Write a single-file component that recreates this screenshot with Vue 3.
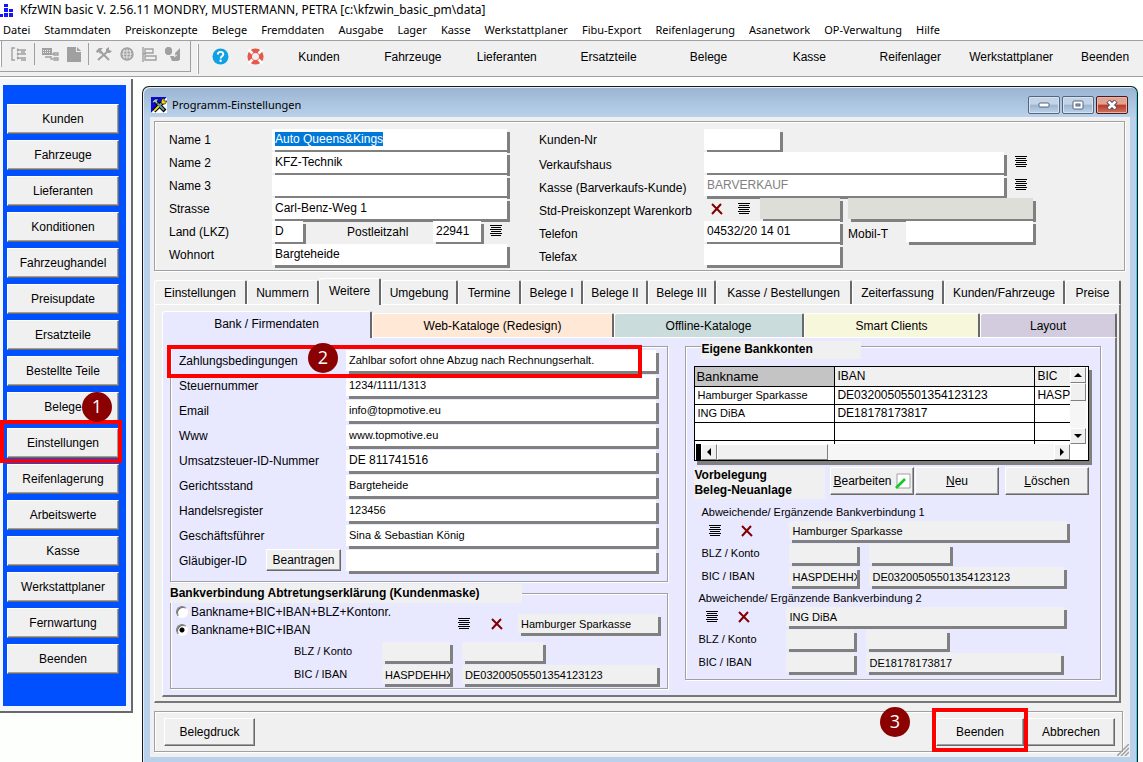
<script setup>
import { onMounted, ref } from 'vue'

const menus = ['Datei', 'Stammdaten', 'Preiskonzepte', 'Belege', 'Fremddaten', 'Ausgabe', 'Lager', 'Kasse', 'Werkstattplaner', 'Fibu-Export', 'Reifenlagerung', 'Asanetwork', 'OP-Verwaltung', 'Hilfe']
const quick = ['Kunden', 'Fahrzeuge', 'Lieferanten', 'Ersatzteile', 'Belege', 'Kasse', 'Reifenlager', 'Werkstattplaner', 'Beenden']
const side = ['Kunden', 'Fahrzeuge', 'Lieferanten', 'Konditionen', 'Fahrzeughandel', 'Preisupdate', 'Ersatzteile', 'Bestellte Teile', 'Belege', 'Einstellungen', 'Reifenlagerung', 'Arbeitswerte', 'Kasse', 'Werkstattplaner', 'Fernwartung', 'Beenden']
const tabs = ['Einstellungen', 'Nummern', 'Weitere', 'Umgebung', 'Termine', 'Belege I', 'Belege II', 'Belege III', 'Kasse / Bestellungen', 'Zeiterfassung', 'Kunden/Fahrzeuge', 'Preise']
const subTabs = [
  { text: 'Bank / Firmendaten', tone: 'lavender' },
  { text: 'Web-Kataloge (Redesign)', tone: 'peach' },
  { text: 'Offline-Kataloge', tone: 'teal' },
  { text: 'Smart Clients', tone: 'cream' },
  { text: 'Layout', tone: 'mauve' }
]
const company = ref([
  { id: 'zahlung', label: 'Zahlungsbedingungen', value: 'Zahlbar sofort ohne Abzug nach Rechnungserhalt.' },
  { id: 'steuer', label: 'Steuernummer', value: '1234/1111/1313' },
  { id: 'email', label: 'Email', value: 'info@topmotive.eu' },
  { id: 'www', label: 'Www', value: 'www.topmotive.eu' },
  { id: 'ust', label: 'Umsatzsteuer-ID-Nummer', value: 'DE 811741516' },
  { id: 'gericht', label: 'Gerichtsstand', value: 'Bargteheide' },
  { id: 'handel', label: 'Handelsregister', value: '123456' },
  { id: 'gf', label: 'Geschäftsführer', value: 'Sina & Sebastian König' },
  { id: 'glaeubiger', label: 'Gläubiger-ID', value: '' }
])
const accounts = [
  ['Hamburger Sparkasse', 'DE03200505501354123123', 'HASPDEHHXXX'],
  ['ING DiBA', 'DE18178173817', ''],
  ['', '', ''],
  ['', '', '']
]
const extra = [
  { no: 1, bank: 'Hamburger Sparkasse', bic: 'HASPDEHHXXX', iban: 'DE03200505501354123123' },
  { no: 2, bank: 'ING DiBA', bic: '', iban: 'DE18178173817' }
]
const mode = ref('kurz')
const name1 = ref(null)

onMounted(() => {
  name1.value.focus()
  name1.value.select()
})
</script>

<template>
  <div class="app">
    <header class="titlebar">
      <svg class="logo" width="14" height="15" viewBox="0 0 14 15" aria-hidden="true">
        <path fill="#1414ff" d="M4 1h4v3H4zM4 5h4v4H4zM9 6h4v3H9zM0 11h3v3H0zM4 10h4v4H4zM9 10h4v4H9z" />
      </svg>
      <h1>KfzWIN basic V. 2.56.11 MONDRY, MUSTERMANN, PETRA [c:\kfzwin_basic_pm\data]</h1>
    </header>

    <nav class="menubar">
      <button v-for="m in menus" :key="m" type="button">{{ m }}</button>
    </nav>

    <div class="toolbar">
      <div class="tools">
        <i class="grip"></i>
        <button type="button" class="tool" aria-label="Struktur" disabled>
          <svg width="16" height="14" viewBox="0 0 16 14"><path fill="none" stroke="#a0a0a0" stroke-width="1.4" d="M4 1H1v12h3M6 2l2 1-2 1M6 6l2 1-2 1M6 10l2 1-2 1M9 3h6M9 7h6M9 11h6M10 5h4M10 13h5" /></svg>
        </button>
        <i class="sep"></i>
        <button type="button" class="tool" aria-label="Netz" disabled>
          <svg width="17" height="14" viewBox="0 0 17 14"><path fill="#a0a0a0" d="M0 1h10v7H0z" /><path stroke="#f0f0f0" stroke-dasharray="1 1" d="M1 3.500h8M1 5.500h8" /><path fill="none" stroke="#a0a0a0" stroke-width="1.3" d="M3 10h6M9 9v3h2M12 6h4v2h-4zM12 11h4v2h-4zM10 7h2" /></svg>
        </button>
        <button type="button" class="tool" aria-label="Seite" disabled>
          <svg width="14" height="15" viewBox="0 0 14 15"><path fill="#a0a0a0" d="M0 0h9v5h5v10H0zM10 0l4 4h-4z" /></svg>
        </button>
        <i class="sep"></i>
        <button type="button" class="tool" aria-label="Werkzeug" disabled>
          <svg width="16" height="14" viewBox="0 0 16 14"><path fill="none" stroke="#a0a0a0" stroke-width="2" d="M2 13L12 4M4 4l9 9" /><path fill="#a0a0a0" d="M0 4l3-3h4L5 3l1 2-2 2-1-2-2 1zM10 2l3-2v3l3 1-2 2-4 0z" /></svg>
        </button>
        <button type="button" class="tool" aria-label="Internet" disabled>
          <svg width="14" height="14" viewBox="0 0 14 14"><circle cx="7" cy="7" r="6" fill="#a0a0a0" /><path fill="none" stroke="#f0f0f0" stroke-width=".8" d="M2 4h10M1 7h12M2 10h10M7 1v12M4.500 2Q2 7 4.500 12M9.500 2q2.500 5 0 10" /><circle cx="7" cy="7" r="6" fill="none" stroke="#a0a0a0" stroke-width="1.4" /></svg>
        </button>
        <button type="button" class="tool" aria-label="Ausrichten" disabled>
          <svg width="15" height="15" viewBox="0 0 15 15"><path fill="none" stroke="#a0a0a0" stroke-width="1.4" d="M1 0v15M1 7h3M3 2h8v4H3zM3 9h11v4H3z" /></svg>
        </button>
        <button type="button" class="tool" aria-label="Formen" disabled>
          <svg width="16" height="15" viewBox="0 0 16 15"><path fill="#a0a0a0" d="M0 2l2-2h3l2 2v4L5 8H2L0 6zM10 6l5-5v12h-4zM5 9h6l3 5H7z" /><path stroke="#f0f0f0" stroke-width="1" d="M9 10l3-2" /></svg>
        </button>
      </div>
      <i class="grip second"></i>
      <button type="button" class="round" aria-label="Hilfe">
        <svg width="17" height="17" viewBox="0 0 17 17"><circle cx="8.500" cy="8.500" r="8" fill="#0ea2e4" /><path fill="none" stroke="#fff" stroke-width="1.900" d="M5.800 6.500c0-3.600 5.500-3.400 5.500-.3 0 2-2.700 2-2.700 4.300" /><circle cx="8.600" cy="12.700" r="1.200" fill="#fff" /></svg>
      </button>
      <button type="button" class="round last" aria-label="Support">
        <svg width="17" height="17" viewBox="0 0 17 17"><circle cx="8.500" cy="8.500" r="5.800" fill="none" stroke="#e8574c" stroke-width="4.600" /><path stroke="#fff" stroke-width="2.600" d="M1.500 1.500l4 4M11.500 11.500l4 4M15.500 1.500l-4 4M5.500 11.500l-4 4" /></svg>
      </button>
      <nav class="quick">
        <button v-for="q in quick" :key="q" type="button">{{ q }}</button>
      </nav>
    </div>

    <div class="workspace">
      <aside class="sidebar">
        <nav>
          <div v-for="(s, i) in side" :key="s" class="anchor">
            <button type="button" class="btn">{{ s }}</button>
            <span v-if="i === 9" class="frame-mark side-mark"></span>
            <span v-if="i === 9" class="badge badge-one">1</span>
          </div>
        </nav>
      </aside>

      <main class="window">
        <div class="caption">
          <svg width="16" height="16" viewBox="0 0 16 16" aria-hidden="true"><path fill="#0a0ae6" d="M0 0h16L0 16z" /><path fill="#fff" d="M16 0v16H0z" /><path stroke="#000" stroke-width="4" d="M3 14L12 5M5 5l9 9" /><path stroke="#f2d21a" stroke-width="2" d="M3 14l5-5" /><path stroke="#6c9a9c" stroke-width="2" d="M5 5l8 8M9 8l3-3" /><path fill="#a8c8c8" stroke="#000" stroke-width=".6" d="M1 5l3-3h4L6 4l1 2-2 1-1-2-2 1z" /><path fill="#f2d21a" stroke="#000" stroke-width=".6" d="M10 5l1-3 2-1v3h3l-2 3h-3z" /></svg>
          <h2>Programm-Einstellungen</h2>
          <button type="button" class="win" aria-label="Minimieren"><svg width="12" height="6" viewBox="0 0 12 6"><rect x="1" y="1" width="10" height="4" rx="1" fill="#fff" stroke="#56657c" /></svg></button>
          <button type="button" class="win" aria-label="Maximieren"><svg width="12" height="10" viewBox="0 0 12 10"><rect x="1" y="1" width="10" height="8" rx="1" fill="#fff" stroke="#56657c" /><rect x="4" y="4" width="4" height="2" fill="#9cb4cf" stroke="#56657c" /></svg></button>
          <button type="button" class="win close" aria-label="Schließen"><svg width="12" height="10" viewBox="0 0 12 10"><path stroke="#5b4c60" stroke-width="4.600" d="M2 1l8 8M10 1L2 9" /><path stroke="#fff" stroke-width="2.600" d="M2.500 1.500l7 7M9.500 1.500l-7 7" /></svg></button>
        </div>

        <div class="client">
          <section class="groove address">
            <div>
              <div class="row"><label for="name1">Name 1</label><input id="name1" ref="name1" class="field grow" value="Auto Queens&amp;Kings"></div>
              <div class="row"><label for="name2">Name 2</label><input id="name2" class="field grow" value="KFZ-Technik"></div>
              <div class="row"><label for="name3">Name 3</label><input id="name3" class="field grow"></div>
              <div class="row"><label for="str">Strasse</label><input id="str" class="field grow" value="Carl-Benz-Weg 1"></div>
              <div class="row">
                <label for="lkz">Land (LKZ)</label><input id="lkz" class="field w-lkz" value="D">
                <label for="plz" class="plz-label">Postleitzahl</label><input id="plz" class="field w-plz" value="22941">
                <button type="button" class="ico" aria-label="Auswahl"><i class="lines"></i></button>
              </div>
              <div class="row"><label for="ort">Wohnort</label><input id="ort" class="field grow" value="Bargteheide"></div>
            </div>
            <div class="contact">
              <div class="row"><label for="kdnr">Kunden-Nr</label><input id="kdnr" class="field w-nr"></div>
              <div class="row"><label for="vk">Verkaufshaus</label><input id="vk" class="field w-wide"><button type="button" class="ico" aria-label="Auswahl"><i class="lines"></i></button></div>
              <div class="row"><label for="bar">Kasse (Barverkaufs-Kunde)</label><input id="bar" class="field w-wide muted" value="BARVERKAUF" readonly><button type="button" class="ico" aria-label="Auswahl"><i class="lines"></i></button></div>
              <div class="row">
                <label for="std">Std-Preiskonzept Warenkorb</label>
                <span class="pair">
                  <button type="button" class="ico" aria-label="Entfernen"><svg width="12" height="12" viewBox="0 0 12 12"><path stroke="#800000" stroke-width="2" d="M1 1l10 10M10 1L1 11" /></svg></button>
                  <button type="button" class="ico" aria-label="Auswahl"><i class="lines"></i></button>
                </span>
                <input id="std" class="field off w-std" readonly><input class="field off w-std2" aria-label="Preiskonzept" readonly>
              </div>
              <div class="row"><label for="tel">Telefon</label><input id="tel" class="field w-tel" value="04532/20 14 01"><label for="mob" class="mob">Mobil-T</label><input id="mob" class="field w-mob"></div>
              <div class="row"><label for="fax">Telefax</label><input id="fax" class="field w-tel"></div>
            </div>
          </section>

          <div class="tabs main-tabs">
            <button v-for="(t, i) in tabs" :key="t" type="button" :class="['tab', { active: i === 2 }]">{{ t }}</button>
          </div>
          <div class="page outer">
            <div class="tabs sub-tabs">
              <button v-for="(t, i) in subTabs" :key="t.text" type="button" :class="['tab', t.tone, { active: i === 0 }]">{{ t.text }}</button>
            </div>
            <div class="page inner">
              <div class="col">
                <section class="groove company">
                  <div v-for="(c, i) in company" :key="c.id" class="row anchor">
                    <label :for="c.id">{{ c.label }}</label>
                    <button v-if="c.id === 'glaeubiger'" type="button" class="btn request">Beantragen</button>
                    <input :id="c.id" v-model="c.value" :class="['field', 'grow', { big: c.id === 'ust' }]">
                    <span v-if="i === 0" class="frame-mark row-mark"></span>
                    <span v-if="i === 0" class="badge badge-two">2</span>
                  </div>
                </section>

                <section class="groove cession">
                  <h3>Bankverbindung Abtretungserklärung (Kundenmaske)</h3>
                  <div class="choice">
                    <div class="radios">
                      <label><input v-model="mode" type="radio" name="mode" value="lang">Bankname+BIC+IBAN+BLZ+Kontonr.</label>
                      <label><input v-model="mode" type="radio" name="mode" value="kurz">Bankname+BIC+IBAN</label>
                    </div>
                    <span class="pair">
                      <button type="button" class="ico" aria-label="Auswahl"><i class="lines"></i></button>
                      <button type="button" class="ico" aria-label="Entfernen"><svg width="12" height="12" viewBox="0 0 12 12"><path stroke="#800000" stroke-width="2" d="M1 1l10 10M10 1L1 11" /></svg></button>
                    </span>
                    <input class="slim w-bank" aria-label="Bank" value="Hamburger Sparkasse" readonly>
                  </div>
                  <div class="srow"><label for="z-blz">BLZ / Konto</label><input id="z-blz" class="slim w-s" readonly><input class="slim w-m" aria-label="Konto" readonly></div>
                  <div class="srow"><label for="z-bic">BIC / IBAN</label><input id="z-bic" class="slim w-s" value="HASPDEHHXXX" readonly><input class="slim w-l" aria-label="IBAN" value="DE03200505501354123123" readonly></div>
                </section>
              </div>

              <section class="groove banks">
                <h3>Eigene Bankkonten</h3>
                <div class="list">
                  <div class="cells">
                    <table>
                      <thead><tr><th>Bankname</th><th>IBAN</th><th>BIC</th></tr></thead>
                      <tbody>
                        <tr v-for="(a, i) in accounts" :key="i"><td v-for="(v, k) in a" :key="k">{{ v }}</td></tr>
                      </tbody>
                    </table>
                  </div>
                  <div class="vbar">
                    <button type="button" aria-label="Nach oben"><svg width="8" height="4" viewBox="0 0 8 4"><path d="M4 0l4 4H0z" /></svg></button>
                    <i class="vthumb"></i>
                    <i class="track"></i>
                    <button type="button" aria-label="Nach unten"><svg width="8" height="4" viewBox="0 0 8 4"><path d="M0 0h8L4 4z" /></svg></button>
                  </div>
                  <div class="hbar">
                    <button type="button" aria-label="Nach links"><svg width="4" height="8" viewBox="0 0 4 8"><path d="M4 0v8L0 4z" /></svg></button>
                    <i class="hthumb"></i>
                    <i class="track"></i>
                    <button type="button" aria-label="Nach rechts"><svg width="4" height="8" viewBox="0 0 4 8"><path d="M0 0l4 4-4 4z" /></svg></button>
                  </div>
                </div>
                <div class="actions">
                  <h3>Vorbelegung<br>Beleg-Neuanlage</h3>
                  <button type="button" class="btn edit"><span><u>B</u>earbeiten</span>
                    <svg width="16" height="16" viewBox="0 0 16 16" aria-hidden="true"><path fill="#fff" stroke="#a0a0a0" d="M2 1h13v14H2z" /><path stroke="#14c828" stroke-width="2.600" d="M1 15l9-9" /></svg>
                  </button>
                  <button type="button" class="btn"><span><u>N</u>eu</span></button>
                  <button type="button" class="btn apart"><span><u>L</u>öschen</span></button>
                </div>
                <div v-for="e in extra" :key="e.no" :class="['extra', 'extra-' + e.no]">
                  <p>Abweichende/ Ergänzende Bankverbindung {{ e.no }}</p>
                  <div class="srow">
                    <span class="pair">
                      <button type="button" class="ico" aria-label="Auswahl"><i class="lines"></i></button>
                      <button type="button" class="ico" aria-label="Entfernen"><svg width="12" height="12" viewBox="0 0 12 12"><path stroke="#800000" stroke-width="2" d="M1 1l10 10M10 1L1 11" /></svg></button>
                    </span>
                    <input class="slim w-xl" aria-label="Bank" :value="e.bank" readonly>
                  </div>
                  <div class="srow"><label :for="'blz' + e.no">BLZ / Konto</label><input :id="'blz' + e.no" class="slim w-s" readonly><input class="slim w-m" aria-label="Konto" readonly></div>
                  <div class="srow"><label :for="'bic' + e.no">BIC / IBAN</label><input :id="'bic' + e.no" class="slim w-s" :value="e.bic" readonly><input class="slim w-l" aria-label="IBAN" :value="e.iban" readonly></div>
                </div>
              </section>
            </div>
          </div>

          <footer class="groove bottom">
            <button type="button" class="btn print">Belegdruck</button>
            <div class="anchor finish">
              <button type="button" class="btn">Beenden</button>
              <span class="frame-mark end-mark"></span>
              <span class="badge badge-three">3</span>
            </div>
            <button type="button" class="btn">Abbrechen</button>
          </footer>
          <svg class="resize" width="12" height="12" viewBox="0 0 12 12" aria-hidden="true"><path stroke="#a0a0a0" stroke-width="1.500" d="M0 12L12 0M4 12l8-8M8 12l4-4" /></svg>
        </div>
      </main>
    </div>
  </div>
</template>

<style>
body {
  margin: 0;
}
</style>

<style scoped>
.app {
  display: flex;
  flex-direction: column;
  min-height: 100vh;
  background: #fdfffc;
  color: #000;
  font: 12px/16px "Liberation Sans", Arial, sans-serif;
}
.app *, .app *::before, .app *::after { box-sizing: border-box; }
button, input { font: inherit; color: inherit; margin: 0; }
button { padding: 0; border: 0; background: none; white-space: nowrap; }
h1, h2, h3, p { margin: 0; font-weight: normal; font-size: 12px; }
label { white-space: nowrap; flex: none; }
svg { display: block; flex: none; }
i { display: block; flex: none; }

.titlebar { display: flex; align-items: center; gap: 6px; height: 20px; background: #fff; }
.titlebar h1 { font: 12px/18px "Noto Sans", "Open Sans", sans-serif; }
.menubar {
  display: flex;
  gap: 14px;
  height: 20px;
  padding-left: 3px;
  background: #fff;
  font: 11px/20px "Noto Sans", "Open Sans", sans-serif;
}

.toolbar {
  display: flex;
  height: 37px;
  background: #f0f0f0;
  border-top: 1px solid #a0a0a0;
  border-bottom: 1px solid #a0a0a0;
}
.tools {
  display: flex;
  align-items: center;
  width: 191px;
  height: 31px;
  padding-bottom: 4px;
  border-right: 1px solid #a0a0a0;
  border-bottom: 1px solid #a0a0a0;
  gap: 8px;
}
.grip { width: 2px; height: 26px; margin-right: 1px; border-right: 1px solid #a0a0a0; background: #fff; }
.grip.second { height: 30px; margin: 3px 13px 0 6px; }
.tools .sep { width: 1px; height: 22px; margin: 0 -1px; background: #a0a0a0; }
.round { width: 18px; margin-right: 17px; height: 30px; }
.round.last { margin-right: 7px; }
.quick {
  flex: 1;
  display: grid;
  grid-template-columns: 94fr 94fr 94fr 110fr 90fr 112fr 90fr 112fr 76fr;
  padding-bottom: 3px;
}

.workspace { flex: 1; display: flex; align-items: flex-start; }
.sidebar {
  flex: none;
  width: 133px;
  margin: 2px 9px 0 0;
  padding: 6px 5px 5px 3px;
  background: #f3f7fb;
  border-right: 2px solid #696969;
  border-bottom: 2px solid #696969;
}
.sidebar nav {
  display: flex;
  flex-direction: column;
  gap: 6px;
  padding: 19px 7px 32px 4px;
  background: #0050ff;
}
.sidebar .btn { width: 100%; height: 30px; }
.btn {
  background: #f0f0f0;
  border: 1px solid;
  border-color: #fff #696969 #696969 #fff;
  box-shadow: inset -1px -1px 0 #a0a0a0;
  text-align: center;
}
.anchor { position: relative; }
.frame-mark { position: absolute; border: 4px solid #f00; pointer-events: none; z-index: 1; }
.badge {
  position: absolute;
  z-index: 2;
  width: 30px;
  height: 30px;
  border-radius: 50%;
  background: #8b0000;
  color: #fff;
  font: 18px/29px "Open Sans", "Noto Sans", sans-serif;
  text-align: center;
}
.side-mark { inset: -8px -3px -5px -7px; }
.badge-one { left: 75px; top: -36px; }
.row-mark { left: -12px; right: 17px; top: -5px; height: 33px; }
.badge-two { left: 129px; top: -7px; }
.end-mark { inset: -10px -4px -6px -4px; }
.badge-three { left: -56px; top: -11px; }

.window {
  flex: 1;
  min-width: 0;
  margin: 9px 5px 0 0;
  padding: 0 7px 5px;
  border: 1px solid #1a1a1a;
  border-bottom: 0;
  border-radius: 7px 7px 0 0;
  background: linear-gradient(#9ab4d2, #b9d1ea 30px);
  box-shadow: inset 1px 1px 0 #e4eefa, inset -1px 0 0 #35d0ee;
}
.caption { display: flex; align-items: center; gap: 2px; height: 30px; padding: 6px 2px 0 1px; }
.caption h2 { flex: 1; margin-left: 3px; font: 11px/18px "Noto Sans", "Open Sans", sans-serif; }
.win {
  display: flex;
  align-items: center;
  justify-content: center;
  width: 32px;
  height: 18px;
  border: 1px solid #56657c;
  border-radius: 2px;
  background: linear-gradient(#c3d4e8 45%, #9cb4cf 50%, #bcd2ea);
  box-shadow: inset 0 0 0 1px #d5e3f2;
}
.win.close { border-color: #4b1a1e; background: linear-gradient(#e3a394 45%, #b93a24 50%, #cf7360); box-shadow: inset 0 0 0 1px #e8b4a8; }

.client { position: relative; padding: 4px 5px 5px 4px; background: #f0f0f0; }
.groove { border: 1px solid #a0a0a0; box-shadow: 1px 1px 0 #fff, inset 1px 1px 0 #fff; }
.address { display: grid; grid-template-columns: 370fr 585fr; padding: 7px 0 3px 14px; }
.row { display: flex; height: 23px; line-height: 23px; }
.row > label:first-child { width: 103px; }
.contact .row > label:first-child { width: 165px; }
.contact .row + .row > label { padding-top: 2px; }
.address > div:first-child .grow { margin-right: 32px; }
.field {
  height: 21px;
  padding: 0 3px 2px;
  border: 0;
  border-radius: 0;
  outline: 0;
  background: #fff;
  box-shadow: 3px 3px 0 #808080;
  line-height: 15px;
  min-width: 0;
}
.field::selection { background: #0078d7; color: #fff; }
.field.muted { color: #808080; }
.field.off { background: #deded9; }
.grow { flex: 1; }
.w-lkz { width: 31px; }
.address .plz-label { margin: 0 0 0 44px; width: 86px; }
.w-plz { width: 48px; margin-right: 9px; }
.w-nr { width: 76px; }
.w-wide { width: 300px; margin-right: 11px; }
.w-std { width: 80px; margin-right: 8px; }
.w-std2 { width: 185px; }
.w-tel { width: 136px; }
.mob { width: 58px; margin-left: 8px; }
.w-mob { width: 127px; }
.ico { width: 12px; height: 19px; display: flex; align-items: center; flex: none; }
.lines {
  width: 12px;
  height: 11px;
  background:
    linear-gradient(#000 0 0) 0 0 / 12px 1px,
    linear-gradient(#000 0 0) 50% 2px / 10px 1px,
    linear-gradient(#000 0 0) 0 4px / 12px 1px,
    linear-gradient(#000 0 0) 50% 6px / 10px 1px,
    linear-gradient(#000 0 0) 0 8px / 12px 1px,
    linear-gradient(#000 0 0) 50% 10px / 10px 1px;
  background-repeat: no-repeat;
}
.pair { display: flex; flex: none; }
.contact .pair { width: 56px; padding: 1px 0 0 7px; gap: 15px; }

.tabs { display: grid; align-items: end; height: 26px; }
.main-tabs { grid-template-columns: 93fr 72fr 62fr 77fr 63fr 62fr 65fr 68fr 136fr 92fr 121fr 56fr; margin: 7px 4px 0 0; }
.sub-tabs { grid-template-columns: 210fr 242fr 190fr 176fr 137fr; }
.tab {
  height: 24px;
  background: #f0f0f0;
  border: 1px solid #fff;
  border-bottom: 0;
  border-right: 2px solid #696969;
  border-radius: 3px 2px 0 0;
  overflow: hidden;
  min-width: 0;
}
.tab.active { position: relative; height: 27px; margin-bottom: -1px; padding-bottom: 2px; }
.page { border: solid; border-width: 1px 2px 2px 1px; border-color: #fff #777 #777 #fff; }
.outer { margin-right: 4px; padding: 6px 2px 4px 7px; }
.inner { display: grid; grid-template-columns: 499fr 416fr; column-gap: 17px; padding: 8px 14px 6px 7px; }
.inner, .tab.lavender { background: #e8e8ff; }
.tab.peach { background: #ffe8d6; }
.tab.teal { background: #cbdcdc; }
.tab.cream { background: #f7f7dc; }
.tab.mauve { background: #d2ccde; }

.company { padding: 3px 8px 6px; }
.company .row { height: 25px; line-height: 22px; }
.company .row > label:first-child { width: 167px; }
.company .row:last-child > label:first-child { width: 87px; }
.company .field { font-size: 11px; margin-right: 3px; }
.company .field.big { font-size: 12px; }
.request { width: 75px; height: 22px; margin-right: 5px; margin-top: -1px; line-height: 20px; }

h3 { font-weight: bold; background: #f0f0f0; }
.cession { margin-top: 11px; }
.cession h3 { position: relative; width: 352px; margin: -10px 0 0 -1px; line-height: 19px; }
.choice { display: flex; height: 39px; }
.radios { width: 287px; padding-left: 5px; }
.radios label { display: flex; align-items: center; gap: 3px; height: 18px; }
.radios input {
  appearance: none;
  width: 12px;
  height: 12px;
  border: 1px solid;
  border-color: #808080 #fff #fff #808080;
  border-radius: 50%;
  background: #fff;
  box-shadow: inset 1px 1px 0 #696969;
}
.radios input:checked { background: radial-gradient(circle, #000 2px, #fff 3px); }
.choice .pair { width: 60px; gap: 21px; padding-top: 11px; }
.choice .slim { margin-top: 11px; }
.slim {
  height: 19px;
  padding: 0 0 0 3px;
  border: 0;
  border-radius: 0;
  outline: 0;
  background: #f0f0f0;
  box-shadow: 3px 3px 0 #808080;
  font-size: 11px;
  line-height: 15px;
  flex: none;
}
.slim + .slim { margin-left: 12px; }
.srow { display: flex; height: 23px; font-size: 11px; line-height: 19px; }
.cession .srow { padding-left: 123px; }
.srow > label, .srow > .pair { width: 88px; }
.w-bank { width: 140px; }
.w-s { width: 68px; }
.w-m { width: 81px; }
.w-l { width: 195px; }
.w-xl { width: 278px; }

.banks { align-self: start; }
.banks h3 { position: relative; }
.banks > h3 { width: 160px; margin: -6px 0 0 15px; height: 18px; line-height: 17px; }
.list {
  display: grid;
  grid-template-columns: 1fr 16px;
  grid-template-rows: 77px 16px;
  margin: 7px 11px 0 8px;
  padding-right: 2px;
  border: 1px solid #000;
  background: #fff;
  box-shadow: 3px 4px 0 #808080;
}
.cells { overflow: hidden; }
table { width: 100%; table-layout: fixed; border-collapse: separate; border-spacing: 0; }
th, td { padding: 0 2px; border-bottom: 1px solid #000; text-align: left; font-weight: normal; overflow: hidden; white-space: nowrap; }
th { height: 20px; line-height: 19px; background: #f0f0f0; }
th:first-child { width: 139px; background: #c4c4c4; font-size: 13px; padding-left: 1px; }
th:nth-child(2) { width: 200px; }
th + th, td + td { border-left: 1px solid #000; }
td { height: 18px; line-height: 17px; }
td:first-child { font-size: 11px; }
td:last-child { padding-right: 0; }
.vbar { display: flex; flex-direction: column; }
.hbar { display: flex; margin-left: 1px; border-left: 5px solid #000; }
.vbar button, .hbar button {
  display: flex;
  align-items: center;
  justify-content: center;
  flex: none;
  width: 16px;
  height: 16px;
}
.vbar button, .hbar button, .vthumb, .hthumb {
  background: #f0f0f0;
  border: 1px solid;
  border-color: #fff #808080 #808080 #fff;
}
.vthumb { height: 18px; }
.hthumb { width: 111px; }
.track { flex: 1; background: #f6f6f6; }
.actions { display: flex; margin: 6px 11px 0 8px; height: 32px; }
.actions h3 { width: 131px; margin-right: auto; line-height: 15px; padding-top: 1px; }
.actions .btn { width: 84px; height: 28px; margin-left: 1px; }
.actions .btn.edit { display: flex; align-items: center; justify-content: center; gap: 3px; }
.actions .btn.apart { margin-left: 6px; }
.extra p { font-size: 11px; line-height: 17px; }
.extra-1 { padding-left: 15px; margin-top: 5px; }
.extra-2 { padding-left: 12px; margin-bottom: 3px; }
.extra .pair { padding-left: 8px; gap: 20px; }

.bottom { display: flex; align-items: flex-start; margin: 8px 2px 0 0; padding: 6px 7px 5px 9px; }
.bottom .btn { width: 88px; height: 28px; }
.bottom .print { width: 91px; margin-right: auto; }
.finish { margin-right: 3px; }
.resize { position: absolute; right: 1px; bottom: 1px; }
</style>
